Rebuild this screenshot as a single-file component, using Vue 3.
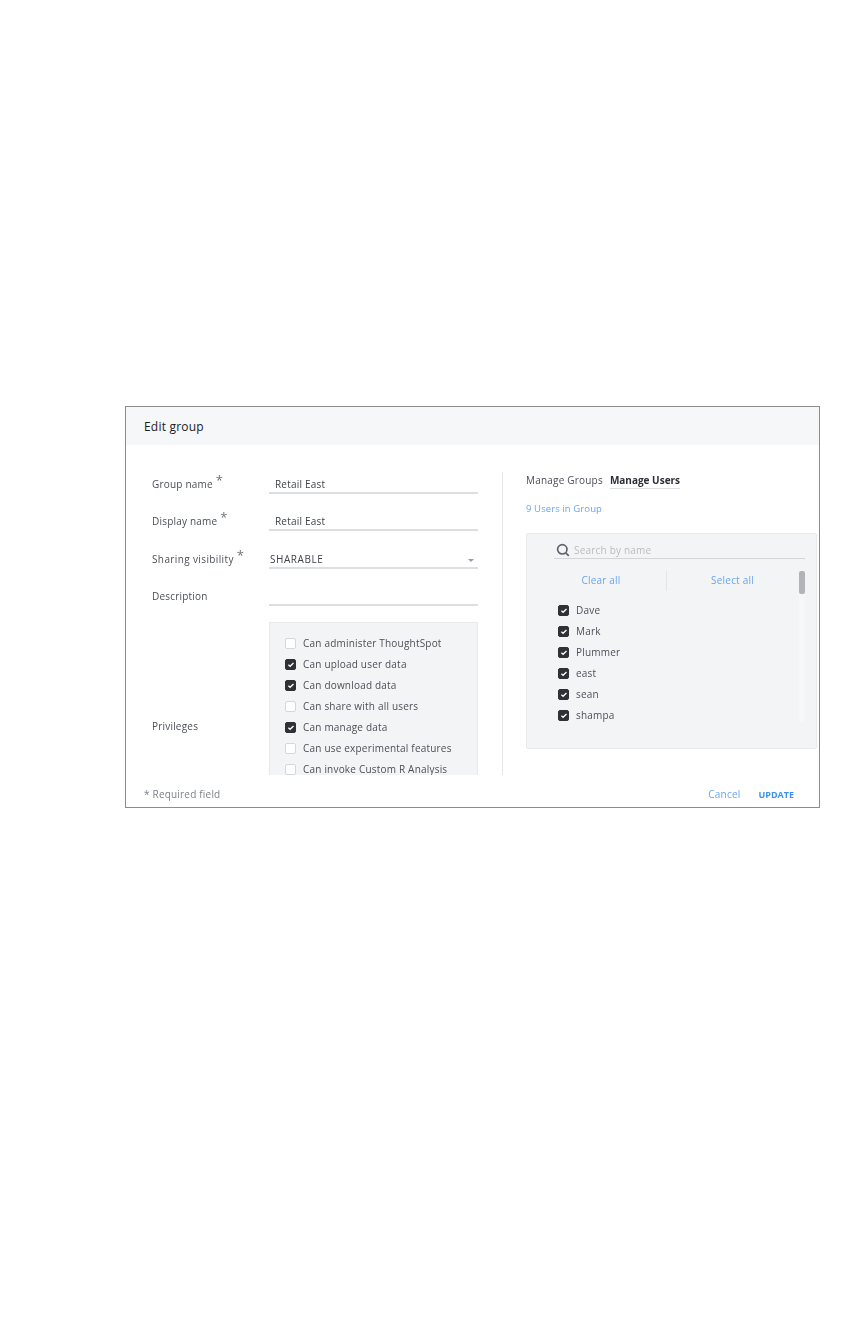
<script setup>
const privileges = [
  { label: 'Can administer ThoughtSpot', on: false },
  { label: 'Can upload user data', on: true },
  { label: 'Can download data', on: true },
  { label: 'Can share with all users', on: false },
  { label: 'Can manage data', on: true },
  { label: 'Can use experimental features', on: false },
  { label: 'Can invoke Custom R Analysis', on: false }
]
const users = ['Dave', 'Mark', 'Plummer', 'east', 'sean', 'shampa']
</script>

<template>
  <div class="page">
    <div class="dialog">
      <header class="head">Edit group</header>
      <div class="body">
        <section class="left">
          <div class="row">
            <div class="label">Group name<sup class="req">*</sup></div>
            <div class="field"><span class="value">Retail East</span></div>
          </div>
          <div class="row">
            <div class="label">Display name<sup class="req">*</sup></div>
            <div class="field"><span class="value">Retail East</span></div>
          </div>
          <div class="row">
            <div class="label wide">Sharing visibility<sup class="req">*</sup></div>
            <div class="field select">
              <span class="caps">SHARABLE</span>
              <svg class="caret" width="6" height="3" viewBox="0 0 6 3"><path d="M0 0h6L3 3z" fill="#9a9ea6" /></svg>
            </div>
          </div>
          <div class="row">
            <div class="label">Description</div>
            <div class="field"></div>
          </div>
          <div class="priv">
            <div class="label priv-label">Privileges</div>
            <div class="priv-box">
              <label v-for="p in privileges" :key="p.label" class="check">
                <span class="box" :class="{ on: p.on }">
                  <svg v-if="p.on" width="8" height="7" viewBox="0 0 8 7"><path d="M1.4 3.7l1.7 1.6 3.4-3.3" fill="none" stroke="#fff" stroke-width="1.3" /></svg>
                </span>
                {{ p.label }}
              </label>
            </div>
          </div>
        </section>
        <section class="right">
          <div class="tabs">
            <span class="tab">Manage Groups</span>
            <span class="tab active">Manage Users</span>
          </div>
          <div class="count">9 Users in Group</div>
          <div class="panel">
            <div class="search">
              <svg width="14" height="14" viewBox="0 0 14 14"><circle cx="6.3" cy="6.3" r="4.7" fill="none" stroke="#5d6470" stroke-width="1.7" /><path d="M9.8 9.8l3 3" stroke="#5d6470" stroke-width="1.7" /></svg>
              <span class="placeholder">Search by name</span>
            </div>
            <div class="list-wrap">
              <div class="list">
                <div class="actions">
                  <span class="link">Clear all</span>
                  <span class="sep"></span>
                  <span class="link">Select all</span>
                </div>
                <label v-for="u in users" :key="u" class="check user">
                  <span class="box on">
                    <svg width="8" height="7" viewBox="0 0 8 7"><path d="M1.4 3.7l1.7 1.6 3.4-3.3" fill="none" stroke="#fff" stroke-width="1.3" /></svg>
                  </span>
                  {{ u }}
                </label>
              </div>
              <div class="track"><div class="thumb"></div></div>
            </div>
          </div>
        </section>
      </div>
      <footer class="foot">
        <span class="note">* Required field</span>
        <span class="actions-foot">
          <span class="cancel">Cancel</span>
          <span class="update">UPDATE</span>
        </span>
      </footer>
    </div>
  </div>
</template>

<style scoped>
.page {
  width: 864px;
  height: 1344px;
  padding: 406px 0 0 125px;
  box-sizing: border-box;
  background: #fff;
  font-family: "Open Sans", "Liberation Sans", sans-serif;
  font-size: 10px;
  color: #4a4f57;
  letter-spacing: 0.2px;
}
.dialog {
  width: 695px;
  height: 402px;
  box-sizing: border-box;
  border: 1px solid #8c8c8c;
  display: flex;
  flex-direction: column;
  filter: blur(0.3px);
}
.head {
  height: 38px;
  flex: none;
  background: #f6f7f9;
  padding-left: 18px;
  display: flex;
  align-items: center;
  font-size: 12px;
  letter-spacing: 0.2px;
  color: #1d2024;
}
.body {
  flex: none;
  height: 330px;
  display: flex;
  overflow: hidden;
}
.left {
  width: 376px;
  flex: none;
  box-sizing: border-box;
  padding: 25px 24px 0 26px;
}
.row {
  display: flex;
  height: 37.5px;
}
.label {
  width: 117px;
  flex: none;
  padding-top: 6.6px;
  line-height: 14px;
}
.label.wide { letter-spacing: 0.38px; }
.req {
  font-size: 13px;
  line-height: 0;
  margin-left: 3px;
  vertical-align: 3px;
  color: #6d727a;
}
.field {
  flex: 1;
  height: 20.5px;
  border-bottom: 2px solid #dcdee2;
  display: flex;
  align-items: flex-end;
  justify-content: space-between;
  padding-bottom: 1px;
  line-height: 14px;
  color: #3f434a;
}
.value { padding-left: 6px; }
.caps { padding-left: 1px; letter-spacing: 0.55px; }
.caret { margin: 0 4px 4px 0; }
.priv {
  display: flex;
  align-items: center;
  margin-top: 2px;
  height: 210px;
}
.priv-label { padding-top: 0; margin-top: -3px; }
.priv-box {
  flex: 1;
  height: 210px;
  box-sizing: border-box;
  padding: 10px 0 0 15px;
  background: #f3f4f6;
  border: 1px solid #e8e9ec;
  border-bottom: 0;
  align-self: flex-start;
}
.check {
  display: flex;
  align-items: center;
  gap: 7px;
  height: 21px;
  line-height: 21px;
  white-space: nowrap;
}
.box {
  width: 11px;
  height: 11px;
  box-sizing: border-box;
  flex: none;
  border: 1px solid #d5d7db;
  border-radius: 2px;
  background: #fff;
  display: flex;
  align-items: center;
  justify-content: center;
}
.box.on {
  background: #2f3136;
  border-color: #2f3136;
}
.right {
  flex: 1;
  margin-top: 27px;
  border-left: 1px solid #e6e7ea;
  padding-left: 23px;
  padding-right: 2px;
}
.tabs {
  display: flex;
  gap: 7px;
  line-height: 14px;
  height: 16px;
  padding-top: 1px;
}
.tab.active {
  font-weight: 700;
  letter-spacing: 0;
  color: #2b3038;
  border-bottom: 1px solid #dcdee2;
  height: 15px;
}
.count {
  margin-top: 13px;
  color: #6aa5ee;
  font-size: 9.5px;
  letter-spacing: 0.1px;
  line-height: 14px;
}
.panel {
  margin-top: 17px;
  height: 216px;
  box-sizing: border-box;
  background: #f3f4f6;
  border: 1px solid #e8e9ec;
  border-radius: 2px;
  padding: 8px 11px 0 27px;
}
.search {
  display: flex;
  align-items: center;
  gap: 4px;
  height: 16px;
  padding: 0 0 1px 2px;
  box-sizing: content-box;
  height: 15px;
  border-bottom: 1px solid #d3d5d9;
}
.placeholder { color: #b9bcc2; }
.list-wrap {
  display: flex;
  height: 151px;
  margin-top: 12px;
}
.list {
  flex: 1;
  padding-left: 4px;
}
.actions {
  display: grid;
  grid-template-columns: 130px 1px 131px;
  align-items: center;
  height: 20px;
  margin-bottom: 9px;
  margin-left: -22px;
  text-align: center;
  color: #6aa5ee;
}
.link { margin-bottom: 2px; }
.sep {
  height: 20px;
  background: #e3e5e8;
}
.track {
  width: 6px;
  flex: none;
  background: #f6f7f8;
}
.thumb {
  height: 23px;
  background: #b2b3b6;
  border-radius: 2px;
}
.foot {
  flex: 1;
  display: flex;
  align-items: center;
  justify-content: space-between;
  padding: 6px 25px 0 18px;
}
.note { color: #7c8088; }
.actions-foot {
  display: flex;
  gap: 18px;
  align-items: center;
}
.cancel { color: #6aa5ee; }
.update {
  color: #3c92ee;
  font-weight: 700;
  font-size: 9px;
  letter-spacing: 0;
}
</style>
